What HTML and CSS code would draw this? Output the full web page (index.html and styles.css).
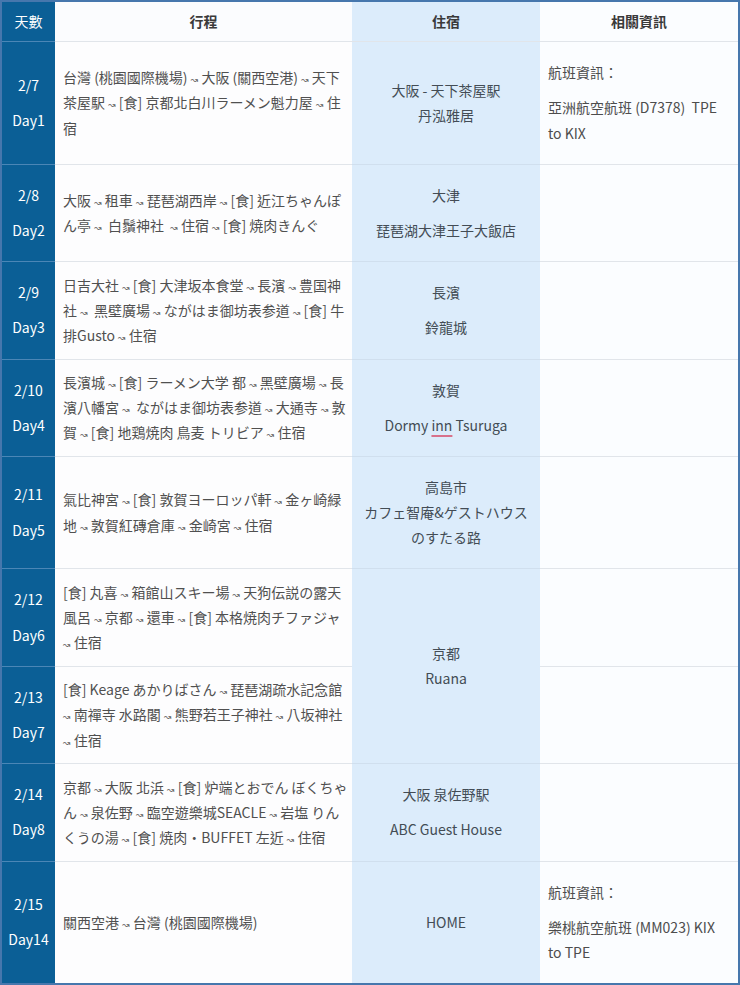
FILE: index.html
```html
<!DOCTYPE html>
<html lang="zh-Hant">
<head>
<meta charset="utf-8">
<title>行程</title>
<link rel="stylesheet" href="styles.css">
</head>
<body>
<table class="trip">
  <colgroup>
    <col class="c-day"><col class="c-plan"><col class="c-stay"><col class="c-info">
  </colgroup>
  <thead>
    <tr>
      <th class="day">天數</th>
      <th class="plan">行程</th>
      <th class="stay">住宿</th>
      <th class="info">相關資訊</th>
    </tr>
  </thead>
  <tbody>
    <tr>
      <td class="day"><p>2/7</p><p>Day1</p></td>
      <td class="plan"><p>台灣 (桃園國際機場) <span class="ar">↝</span> 大阪 (關西空港) <span class="ar">↝</span> 天下茶屋駅 <span class="ar">↝</span> [食] 京都北白川ラーメン魁力屋 <span class="ar">↝</span> 住宿</p></td>
      <td class="stay"><p>大阪 - 天下茶屋駅<br>丹泓雅居</p></td>
      <td class="info"><p>航班資訊：</p><p>亞洲航空航班 (D7378)&nbsp; TPE to KIX</p></td>
    </tr>
    <tr>
      <td class="day"><p>2/8</p><p>Day2</p></td>
      <td class="plan"><p>大阪 <span class="ar">↝</span> 租車 <span class="ar">↝</span> 琵琶湖西岸 <span class="ar">↝</span> [食] 近江ちゃんぽん亭 <span class="ar">↝</span>&nbsp; 白鬚神社&nbsp; <span class="ar">↝</span> 住宿 <span class="ar">↝</span> [食] 焼肉きんぐ</p></td>
      <td class="stay"><p>大津</p><p>琵琶湖大津王子大飯店</p></td>
      <td class="info"></td>
    </tr>
    <tr>
      <td class="day"><p>2/9</p><p>Day3</p></td>
      <td class="plan"><p>日吉大社 <span class="ar">↝</span> [食] 大津坂本食堂 <span class="ar">↝</span> 長濱 <span class="ar">↝</span> 豊国神社 <span class="ar">↝</span>&nbsp; 黑壁廣場 <span class="ar">↝</span> ながはま御坊表参道 <span class="ar">↝</span> [食] 牛排Gusto <span class="ar">↝</span> 住宿</p></td>
      <td class="stay"><p>長濱</p><p>鈴龍城</p></td>
      <td class="info"></td>
    </tr>
    <tr>
      <td class="day"><p>2/10</p><p>Day4</p></td>
      <td class="plan"><p>長濱城 <span class="ar">↝</span> [食] ラーメン大学 都 <span class="ar">↝</span> 黑壁廣場 <span class="ar">↝</span> 長濱八幡宮 <span class="ar">↝</span>&nbsp; ながはま御坊表参道 <span class="ar">↝</span> 大通寺 <span class="ar">↝</span> 敦賀 <span class="ar">↝</span> [食] 地鶏焼肉 鳥麦 トリビア <span class="ar">↝</span> 住宿</p></td>
      <td class="stay"><p>敦賀</p><p>Dormy <span class="spell">inn</span> Tsuruga</p></td>
      <td class="info"></td>
    </tr>
    <tr>
      <td class="day"><p>2/11</p><p>Day5</p></td>
      <td class="plan"><p>氣比神宮 <span class="ar">↝</span> [食] 敦賀ヨーロッパ軒 <span class="ar">↝</span> 金ヶ崎緑地 <span class="ar">↝</span> 敦賀紅磚倉庫 <span class="ar">↝</span> 金崎宮 <span class="ar">↝</span> 住宿</p></td>
      <td class="stay"><p>高島市<br>カフェ智庵&amp;ゲストハウス<br>のすたる路</p></td>
      <td class="info"></td>
    </tr>
    <tr>
      <td class="day"><p>2/12</p><p>Day6</p></td>
      <td class="plan"><p>[食] 丸喜 <span class="ar">↝</span> 箱館山スキー場 <span class="ar">↝</span> 天狗伝説の露天風呂 <span class="ar">↝</span> 京都 <span class="ar">↝</span> 還車 <span class="ar">↝</span> [食] 本格焼肉チファジャ <span class="ar">↝</span> 住宿</p></td>
      <td class="stay" rowspan="2"><p>京都<br>Ruana</p></td>
      <td class="info"></td>
    </tr>
    <tr>
      <td class="day"><p>2/13</p><p>Day7</p></td>
      <td class="plan"><p>[食] Keage あかりばさん <span class="ar">↝</span> 琵琶湖疏水記念館 <span class="ar">↝</span> 南禪寺 水路閣 <span class="ar">↝</span> 熊野若王子神社 <span class="ar">↝</span> 八坂神社 <span class="ar">↝</span> 住宿</p></td>
      <td class="info"></td>
    </tr>
    <tr>
      <td class="day"><p>2/14</p><p>Day8</p></td>
      <td class="plan"><p>京都 <span class="ar">↝</span> 大阪 北浜 <span class="ar">↝</span> [食] 炉端とおでん ぼくちゃん <span class="ar">↝</span> 泉佐野 <span class="ar">↝</span> 臨空遊樂城SEACLE <span class="ar">↝</span> 岩塩 りんくうの湯 <span class="ar">↝</span> [食] 焼肉・BUFFET 左近 <span class="ar">↝</span> 住宿</p></td>
      <td class="stay"><p>大阪 泉佐野駅</p><p>ABC Guest House</p></td>
      <td class="info"></td>
    </tr>
    <tr class="last">
      <td class="day"><p>2/15</p><p>Day14</p></td>
      <td class="plan"><p>關西空港 <span class="ar">↝</span> 台灣 (桃園國際機場)</p></td>
      <td class="stay"><p>HOME</p></td>
      <td class="info"><p>航班資訊：</p><p>樂桃航空航班 (MM023) KIX to TPE</p></td>
    </tr>
  </tbody>
</table>
</body>
</html>
```

FILE: styles.css
```css
html, body {
  margin: 0;
  padding: 0;
  background: #ffffff;
}

body {
  font-family: "Noto Sans CJK TC", "Noto Sans CJK JP", "Noto Sans", sans-serif;
  font-size: 14px;
  line-height: 1.8;
  color: #505050;
}

.trip {
  width: 740px;
  table-layout: fixed;
  border-collapse: separate;
  border-spacing: 0;
  border: 2px solid #4677ad;
}

.c-day { width: 53px; }
.c-plan { width: 297px; }
.c-stay { width: 188px; }
.c-info { width: 198px; }

.trip th,
.trip td {
  padding: 8px 8px;
  vertical-align: middle;
  border-bottom: 1px solid #e1e5ea;
}

.trip th {
  padding: 7px 8px;
  font-weight: 700;
  color: #3a3a3a;
  text-align: center;
}

.trip tr.last td {
  border-bottom: none;
}

.trip p {
  margin: 10px 0;
}

.day {
  background: #0b5f96;
  color: #ffffff;
  text-align: center;
}

.trip td.day,
.trip th.day {
  padding-left: 2px;
  padding-right: 2px;
  border-bottom-color: #4b86b6;
}

.trip th.day {
  font-weight: 400;
  color: #ffffff;
}

.plan {
  background: #fdfdfe;
  color: #505050;
}

.trip td.plan {
  padding-left: 8px;
  padding-right: 1px;
}

.trip td.plan p {
  margin: 0;
}

.trip th.plan {
  background: #fbfcfe;
}

.stay {
  background: #dcecfb;
  color: #434c55;
  text-align: center;
}

.trip td.stay {
  border-bottom-color: #d0dfee;
}

.info {
  background: #fbfdff;
  color: #4d4d4d;
}

.ar {
  font-family: "DejaVu Sans", sans-serif;
  font-size: 9px;
  color: #5a5a5a;
}

.spell {
  text-decoration: underline;
  text-decoration-color: #d8718b;
  text-decoration-thickness: 2px;
  text-underline-offset: 4px;
}
```
